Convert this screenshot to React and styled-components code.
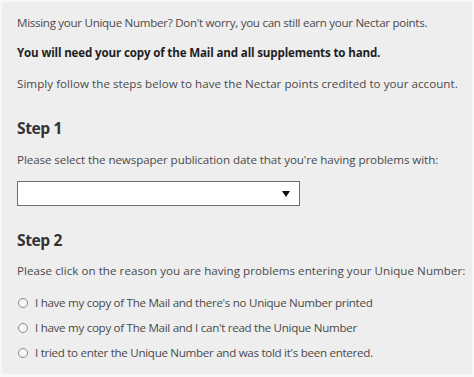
import React from "react";
import styled, { createGlobalStyle } from "styled-components";

const Global = createGlobalStyle`
  html, body { margin: 0; padding: 0; background: #f8f8f8; }
  body { font-family: "Open Sans", "Liberation Sans", sans-serif; }
`;

const Panel = styled.div`
  margin: 2px 2px 0 2px;
  height: 372px;
  background: #eeeeee;
  padding: 12px 0 0 15px;
  box-sizing: border-box;
  color: #4a4a4a;
  overflow: hidden;
`;

const Para = styled.p`
  margin: 0 0 ${(p) => p.$mb ?? 12}px 0;
  font-size: 11.6px;
  letter-spacing: ${(p) => p.$track ?? -0.3}px;
  line-height: 18px;
  white-space: nowrap;
  font-weight: ${(p) => (p.$bold ? 700 : 400)};
  color: ${(p) => (p.$bold ? "#1f1f1f" : "#4a4a4a")};
`;

const Heading = styled.h2`
  margin: 0 0 ${(p) => p.$mb ?? 11}px 0;
  font-size: 15.6px;
  letter-spacing: -0.4px;
  line-height: 24px;
  font-weight: 700;
  color: #333;
`;

const SelectBox = styled.div`
  width: 283px;
  height: 25px;
  background: #fff;
  border: 1px solid #6f6f6f;
  display: flex;
  align-items: center;
  justify-content: flex-end;
  padding-right: 9px;
  box-sizing: border-box;
  margin-bottom: 22px;
`;

const Arrow = styled.span`
  width: 0;
  height: 0;
  border-left: 4px solid transparent;
  border-right: 4px solid transparent;
  border-top: 6px solid #111;
`;

const Options = styled.div`
  display: flex;
  flex-direction: column;
  gap: 7px;
`;

const Option = styled.label`
  display: flex;
  align-items: center;
  gap: 7px;
  font-size: 11.6px;
  letter-spacing: -0.3px;
  line-height: 18px;
  white-space: nowrap;
  color: #4a4a4a;
`;

const Radio = styled.span`
  width: 8px;
  height: 8px;
  border-radius: 50%;
  border: 1px solid #8a8a8a;
  background: #f7f7f7;
  margin-left: 1px;
  flex: none;
`;

export default function App() {
  return (
    <>
      <Global />
      <Panel>
        <Para>Missing your Unique Number? Don't worry, you can still earn your Nectar points.</Para>
        <Para $bold $mb={13} $track={-0.16}>You will need your copy of the Mail and all supplements to hand.</Para>
        <Para $mb={23} $track={0.04}>Simply follow the steps below to have the Nectar points credited to your account.</Para>
        <Heading>Step 1</Heading>
        <Para $mb={12} $track={-0.08}>Please select the newspaper publication date that you're having problems with:</Para>
        <SelectBox>
          <Arrow />
        </SelectBox>
        <Heading $mb={10}>Step 2</Heading>
        <Para $mb={14} $track={0.04}>Please click on the reason you are having problems entering your Unique Number:</Para>
        <Options>
          <Option><Radio />I have my copy of The Mail and there's no Unique Number printed</Option>
          <Option><Radio />I have my copy of The Mail and I can't read the Unique Number</Option>
          <Option><Radio />I tried to enter the Unique Number and was told it's been entered.</Option>
        </Options>
      </Panel>
    </>
  );
}
